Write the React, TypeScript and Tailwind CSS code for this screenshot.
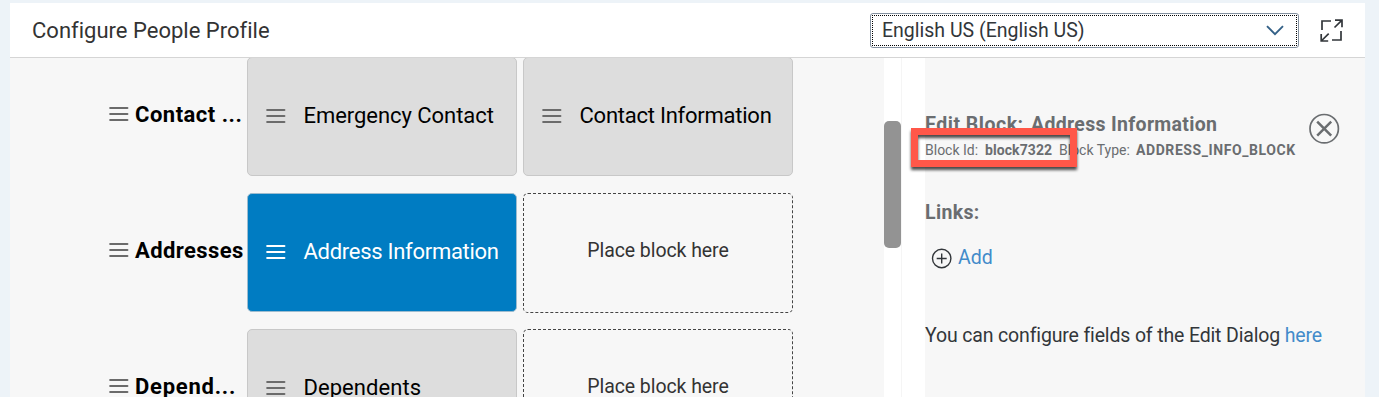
import React from 'react';

interface Block {
  id: string;
  label: string;
  labelClass: string;
  selected?: boolean;
}

interface Section {
  title: string;
  titleClass: string;
  blocks: (Block | null)[];
}

const sections: Section[] = [
  {
    title: 'Contact ...',
    titleClass: 'tracking-[0.5px]',
    blocks: [
      { id: 'emergency', label: 'Emergency Contact', labelClass: 'tracking-[-0.05px]' },
      { id: 'contact', label: 'Contact Information', labelClass: 'tracking-[-0.24px]' },
    ],
  },
  {
    title: 'Addresses',
    titleClass: 'tracking-[0.4px]',
    blocks: [{ id: 'block7322', label: 'Address Information', labelClass: 'tracking-[-0.28px]', selected: true }, null],
  },
  {
    title: 'Depend...',
    titleClass: 'tracking-[0.75px]',
    blocks: [{ id: 'dependents', label: 'Dependents', labelClass: 'tracking-[0.05px]' }, null],
  },
];

const DragHandle: React.FC<{ className?: string }> = ({ className = '' }) => (
  <svg className={`shrink-0 ${className}`} width="20" height="16" viewBox="0 0 20 16" stroke="currentColor" strokeWidth="2.1" strokeLinecap="round">
    <path d="M1.2 2h17.2M1.2 8h17.2M1.2 14h17.2" />
  </svg>
);

const BlockTile: React.FC<{ block: Block }> = ({ block }) => (
  <div
    className={`flex h-[119px] w-[270px] items-center rounded-[5px] border pl-[18px] ${
      block.selected ? 'border-[#9dbccf] bg-[#007cc2] text-white' : 'border-[#c8c8c8] bg-[#dddddd] text-black'
    }`}
  >
    <DragHandle className={block.selected ? 'mb-px text-white' : 'mb-px text-[#6b6b6b]'} />
    <span className={`ml-[17.5px] pb-[2px] text-[22px] leading-7 whitespace-nowrap ${block.labelClass}`}>{block.label}</span>
  </div>
);

const EmptyTile = () => (
  <div className="flex h-[120px] w-[270px] items-center justify-center rounded-[5px] border border-dashed border-[#444444] pb-[4px] text-[19.5px] tracking-[-0.07px] text-[#333333]">
    Place block here
  </div>
);

const Header = () => (
  <header className="flex h-[55px] shrink-0 items-center border-b border-[#d5d5d5] bg-white pl-[22px] shadow-[0_1px_2px_rgba(0,0,0,0.08)]">
    <h1 className="text-[22px] tracking-[0.01px] text-[#333333]">Configure People Profile</h1>
    <button className="ml-auto h-[35px] w-[429px] rounded-[3px] border border-[#8491a0] p-px">
      <span className="flex h-full items-center justify-between border border-dotted border-black pr-[12px] pl-[9px] text-[19.5px] text-[#32363a]">
        <span className="pt-[2px]">English US (English US)</span>
        <svg className="mt-px" width="18" height="11" viewBox="0 0 18 11" fill="none" stroke="#346187" strokeWidth="1.9">
          <path d="M1 1.2l8 8 8-8" />
        </svg>
      </span>
    </button>
    <svg className="mr-[22px] ml-[21px]" width="23" height="23" viewBox="0 0 23 23" fill="none" stroke="#32363a" strokeWidth="1.7">
      <path d="M11 2H2v9M14.5 8.5L22 1.2M15 1.2h7v7M12 21h9v-9M8.7 14.7L1.2 22M1.2 15v7h7" />
    </svg>
  </header>
);

const Layout = () => (
  <div className="flex w-[874px] shrink-0 flex-col overflow-hidden bg-[#f7f7f7]">
    <div className="-mt-px flex flex-col gap-4">
      {sections.map((section) => (
        <div key={section.title} className="flex h-[120px] shrink-0">
          <div className="flex h-full w-[237px] items-center pb-[6px] pl-[98.5px]">
            <DragHandle className="text-[#6b6b6b]" />
            <span className={`ml-[6.5px] text-[22px] font-bold whitespace-nowrap text-black ${section.titleClass}`}>{section.title}</span>
          </div>
          <div className="flex gap-[6px]">
            {section.blocks.map((block, i) => (block ? <BlockTile key={block.id} block={block} /> : <EmptyTile key={i} />))}
          </div>
        </div>
      ))}
    </div>
  </div>
);

const Scrollbar = () => (
  <div className="w-[18px] shrink-0 border-r border-[#f5f5f5] bg-white pt-[63px]">
    <div className="h-[127px] w-[16.5px] rounded-[5px] bg-[#939393]"></div>
  </div>
);

const EditPanel = () => (
  <aside className="relative ml-[23px] flex-1 bg-[#f7f7f7] pt-[54px] whitespace-nowrap">
    <div className="flex">
      <div className="w-[384px]">
        <h2 className="flex text-[19.5px] leading-[26px] font-bold tracking-[0.32px] text-[#6a6d70]">
          <span className="w-[106px] tracking-[0.5px]">Edit Block:</span>
          <span>Address Information</span>
        </h2>
        <p className="flex text-[14px] leading-6 text-[#6a6d70]">
          <span className="w-[60px]">Block Id:</span>
          <b className="w-[74px] tracking-[0.08px]">block7322</b>
          <span className="w-[77px]">Block Type:</span>
          <b className="tracking-[0.58px]">ADDRESS_INFO_BLOCK</b>
        </p>
      </div>
      <svg width="31" height="32" viewBox="0 0 31 32" fill="none" stroke="#6a6d70">
        <circle cx="15.2" cy="16.7" r="14.2" strokeWidth="1.7" />
        <path d="M8.2 9.7l14 14M22.2 9.7l-14 14" strokeWidth="2.5" />
      </svg>
    </div>

    <h3 className="mt-[38px] text-[19.5px] leading-[26px] font-bold tracking-[0.35px] text-[#6a6d70]">Links:</h3>
    <div className="mt-[19px] flex items-center pl-[6px]">
      <svg className="mt-px" width="21" height="21" viewBox="0 0 21 21" fill="none" stroke="#32363a" strokeWidth="1.4">
        <circle cx="10.7" cy="10.5" r="9.2" />
        <path d="M10.7 5.5v10M5.7 10.5h10" />
      </svg>
      <a className="ml-[6px] text-[19.5px] leading-[26px] text-[#428bca]">Add</a>
    </div>
    <p className="mt-[52px] text-[19.5px] leading-[26px] tracking-[-0.15px] text-[#32363a]">
      You can configure fields of the Edit Dialog <a className="text-[#428bca]">here</a>
    </p>

    {/* callout around the block id */}
    <div className="absolute top-[70px] left-[-14px] h-[39px] w-[166px] border-[7px] border-[#ff5749] drop-shadow-[0px_3px_1.5px_rgba(0,0,0,0.7)]"></div>
  </aside>
);

export default function App() {
  return (
    <div className="h-[400px] w-[1384px] overflow-hidden bg-white font-['Roboto','Liberation_Sans',sans-serif]">
      <div className="flex h-[397px] w-[1379px] bg-[#edf3f8] pt-[3px] pl-[10px]">
        <div className="flex w-[1355px] flex-col overflow-hidden">
          <Header />
          <main className="flex min-h-0 flex-1 bg-white">
            <Layout />
            <Scrollbar />
            <EditPanel />
          </main>
        </div>
      </div>
    </div>
  );
}
